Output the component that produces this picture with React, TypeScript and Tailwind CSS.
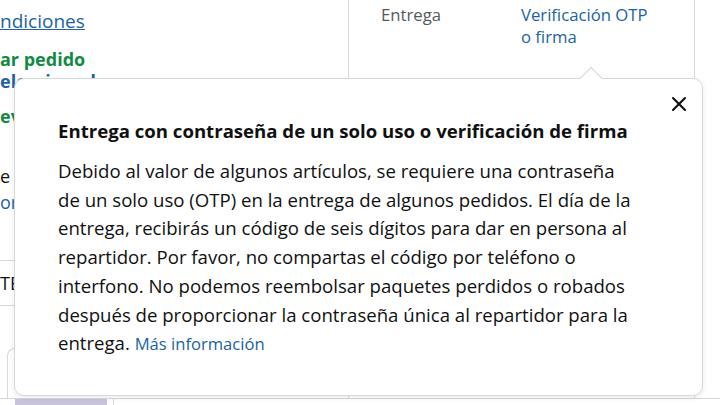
import { X } from "lucide-react";

const bodyLines = [
  "Debido al valor de algunos artículos, se requiere una contraseña",
  "de un solo uso (OTP) en la entrega de algunos pedidos. El día de la",
  "entrega, recibirás un código de seis dígitos para dar en persona al",
  "repartidor. Por favor, no compartas el código por teléfono o",
  "interfono. No podemos reembolsar paquetes perdidos o robados",
  "después de proporcionar la contraseña única al repartidor para la",
];

function OtpPopover() {
  return (
    <div className="absolute left-[14px] top-[78px] h-[318px] w-[689px] rounded-[10px] border border-[#d5d9d9] bg-white shadow-[0_2px_6px_rgba(15,17,17,0.08)]">
      {/* arrow pointing at the delivery method */}
      <div className="absolute left-[568px] top-[-9px] h-[16px] w-[16px] rotate-45 border-l border-t border-[#d5d9d9] bg-white" />
      <button
        type="button"
        className="absolute right-[11px] top-[13px] flex h-[24px] w-[24px] items-center justify-center text-[#0f1111]"
      >
        <X size={30} strokeWidth={2.1} />
      </button>
      <div className="pl-[43px] pt-[39px] text-[#0f1111]">
        <h2 className="text-[18.6px] font-bold leading-[25px]">
          Entrega con contraseña de un solo uso o verificación de firma
        </h2>
        <p className="mt-[14px] text-[18.6px] leading-[28.7px]">
          {bodyLines.map((line) => (
            <span key={line} className="block whitespace-nowrap">
              {line}
            </span>
          ))}
          <span className="block whitespace-nowrap">
            entrega.{" "}
            <a href="#" className="text-[16.6px] text-[#2162a1]">
              Más información
            </a>
          </span>
        </p>
      </div>
    </div>
  );
}

export default function App() {
  return (
    <div className="relative h-[405px] w-[720px] overflow-hidden bg-white font-['Open_Sans',sans-serif] text-[#0f1111]">
      <div className="flex h-[398px]">
        {/* left column, scrolled partly out of view */}
        <div className="flex w-[348px] flex-col overflow-hidden">
          <a href="#" className="mt-[8px] text-[19px] leading-[26px] text-[#2162a1] underline">
            ndiciones
          </a>
          <p className="mt-[14px] text-[18px] font-bold leading-[22px] text-[#138a43]">ar pedido</p>
          <p className="text-[18px] font-bold leading-[22px] text-[#2162a1]">eleccionados ›</p>
          <p className="mt-[13px] text-[18px] font-bold leading-[22px] text-[#138a43]">ev</p>
          <p className="mt-[37px] text-[18px] leading-[24px]">
            e <span className="text-[#c45500]">l</span>
          </p>
          <p className="text-[18px] leading-[28px] text-[#2162a1]">or</p>
          <div className="mt-[44px] h-[46px] w-[14px] border-y border-[#d5d9d9] text-[18px] leading-[44px]">
            TB
          </div>
          <div className="ml-[7px] mt-[42px] flex-1 rounded-tl-[8px] border-l border-t border-[#d5d9d9]" />
        </div>
        {/* delivery summary panel */}
        <div className="w-[347px] border-x border-[#d5d9d9] pl-[32px] pt-[4px] text-[16.7px] leading-[22px]">
          <div className="grid grid-cols-[140px_1fr]">
            <span className="text-[#565959]">Entrega</span>
            <span className="text-[#2162a1]">
              Verificación OTP
              <br />o firma
            </span>
          </div>
          <p className="mt-[30px] text-[#2162a1]">Más información</p>
        </div>
      </div>
      <div className="flex h-[7px] border-t border-[#d5d9d9] pl-[15px]">
        <div className="w-[92px] bg-[#c9c4dc]" />
        <div className="ml-[6px] border-l border-[#d5d9d9]" />
      </div>
      <OtpPopover />
    </div>
  );
}
